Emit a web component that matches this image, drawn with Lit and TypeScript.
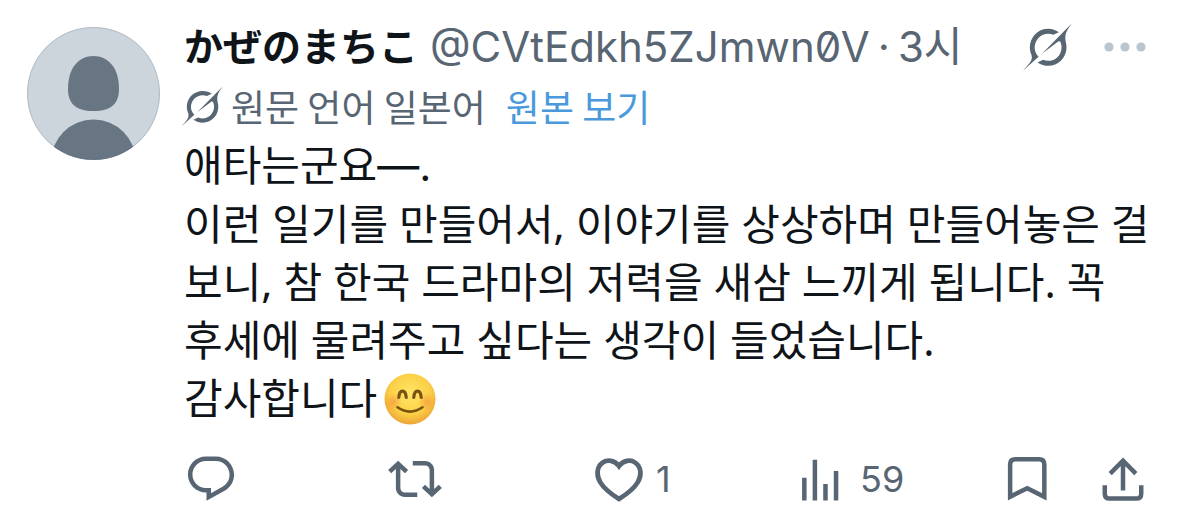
import { LitElement, html, css, svg } from "lit";
import { customElement, property } from "lit/decorators.js";

const grokPath = svg`<path d="M12.745 20.54l10.97-8.19c.539-.4 1.307-.244 1.564.38 1.349 3.288.746 7.241-1.938 9.955-2.683 2.714-6.417 3.31-9.83 1.954l-3.728 1.745c5.347 3.697 11.84 2.782 15.898-1.324 3.219-3.255 4.216-7.692 3.284-11.693l.008.009c-1.351-5.878.332-8.227 3.782-13.031L33 0l-4.54 4.59v-.014L12.743 20.544m-2.263 1.987c-3.837-3.707-3.175-9.446.1-12.755 2.42-2.449 6.388-3.448 9.852-1.979l3.72-1.737c-.67-.49-1.53-1.017-2.515-1.387-4.455-1.854-9.789-.931-13.41 2.728-3.483 3.523-4.579 8.94-2.697 13.561 1.405 3.454-.899 5.898-3.22 8.364C1.49 30.2.666 31.074 0 32l10.478-9.466"/>`;

const icons = {
  reply: svg`<path d="M1.751 10c0-4.42 3.584-8 8.005-8h4.366c4.49 0 8.129 3.64 8.129 8.13 0 2.96-1.607 5.68-4.196 7.11l-8.054 4.46v-3.69h-.067c-4.49.1-8.183-3.51-8.183-8.01zm8.005-6c-3.317 0-6.005 2.69-6.005 6 0 3.37 2.77 6.08 6.138 6.01l.351-.01h1.761v2.3l5.087-2.81c1.951-1.08 3.163-3.13 3.163-5.36 0-3.39-2.744-6.13-6.129-6.13H9.756z"/>`,
  repost: svg`<path d="M4.5 3.88l4.432 4.14-1.364 1.46L5.5 7.55V16c0 1.1.896 2 2 2H13v2H7.5c-2.209 0-4-1.79-4-4V7.55L1.432 9.48.068 8.02 4.5 3.88zM16.5 6H11V4h5.5c2.209 0 4 1.79 4 4v8.45l2.068-1.93 1.364 1.46-4.432 4.14-4.432-4.14 1.364-1.46 2.068 1.93V8c0-1.1-.896-2-2-2z"/>`,
  like: svg`<path d="M12 6.300C10 3.600 6.900 3.300 4.800 4.700 1.900 6.700 1.900 10.500 3.700 13.500 5.300 16.200 8.200 18.500 12 20.900 15.800 18.500 18.700 16.200 20.300 13.500 22.100 10.500 22.100 6.700 19.200 4.700 17.100 3.300 14 3.600 12 6.300z" fill="none" stroke="currentColor" stroke-width="2.100"/>`,
  views: svg`<path d="M2.700 11.400h2V21.500h-2zM7.400 3.400h2V21.500h-2zM12.100 14.200h2v7.300h-2zM16.800 8.400h2v13.100h-2z"/>`,
  bookmark: svg`<path d="M4.500 19.900V5.500q0-2.300 2.300-2.300h10.600q2.300 0 2.300 2.300v14.400L12.100 16.100z" fill="none" stroke="currentColor" stroke-width="2"/>`,
  share: svg`<path d="M12 3.900V17.100M6.300 9.600L12 3.900l5.700 5.700M3.900 14.800v3.700q0 2.200 2.200 2.200h11.800q2.200 0 2.200-2.200v-3.700" fill="none" stroke="currentColor" stroke-width="2"/>`,
};

@customElement("post-action")
class PostAction extends LitElement {
  @property() icon: keyof typeof icons = "reply";
  @property() label = "";
  @property() count = "";
  static styles = css`
    :host { display: block; }
    .action {
      display: flex; align-items: center; gap: 10px;
      margin: 0; padding: 0; border: 0; background: none;
      color: #586573; cursor: pointer;
      font: 36px/54px "Inter", sans-serif;
    }
    .icon { display: block; width: 54px; height: 54px; fill: currentColor; }
  `;
  render() {
    return html`<button class="action" type="button" aria-label=${this.label}>
      <svg class="icon" viewBox="0 0 24 24" aria-hidden="true">${icons[this.icon]}</svg>
      ${this.count ? html`<span>${this.count}</span>` : ""}
    </button>`;
  }
}

@customElement("app-root")
class AppRoot extends LitElement {
  static styles = css`
    :host {
      display: block; background: #fff; color: #0f1419;
      font-family: "Inter", "Noto Sans CJK KR", sans-serif;
    }
    .post { display: flex; gap: 24px; padding: 18px 27px 0; }
    .avatar { flex: none; width: 133px; height: 133px; margin-top: 9px; }
    .content { flex: 1; min-width: 0; }
    .head { display: flex; align-items: center; height: 58px; white-space: nowrap; }
    .name { padding-bottom: 6px; font: 700 39px/52px "Noto Sans CJK JP", sans-serif; color: inherit; text-decoration: none; }
    .meta { display: flex; gap: 8px; margin-left: 12px; font-size: 42px; line-height: 58px; color: #586573; font-feature-settings: "zero"; }
    .meta a { color: inherit; text-decoration: none; }
    .tools { display: flex; align-items: center; gap: 32px; margin-left: auto; padding-right: 6px; }
    .tool { display: block; margin: 0; padding: 0; border: 0; background: none; color: #586573; cursor: pointer; }
    .tool svg, .source svg { display: block; fill: currentColor; }
    .more { color: #b9c5cf; }
    .source {
      display: flex; align-items: center; height: 60px; margin-left: -3px;
      font: 37px/60px "Noto Sans CJK KR", sans-serif; color: #586573;
    }
    .source span { margin: 0 20px 0 8px; }
    .source a { color: #4a99dc; text-decoration: none; }
    .text {
      margin: 0 -12px 0 0;
      font: 42px/58px "Noto Sans", "Noto Sans CJK KR", sans-serif;
      white-space: pre-line; word-break: keep-all;
    }
    .dash { font-family: "Inter", sans-serif; }
    .emoji { width: 52px; height: 52px; margin-left: 7px; vertical-align: -11px; }
    .actions { display: grid; grid-template-columns: repeat(4, 1fr) auto; margin-top: 25px; padding-right: 2px; }
    .pair { display: flex; gap: 42px; }
  `;
  render() {
    return html`<article class="post">
      <svg class="avatar" viewBox="0 0 133 133" role="img" aria-label="프로필 사진">
        <defs><clipPath id="disc"><circle cx="66.500" cy="66.500" r="66.500"/></clipPath></defs>
        <g clip-path="url(#disc)">
          <path fill="#cdd5dc" d="M0 0h133v133H0z"/>
          <path fill="#687684" d="M66.500 29c15 0 25.500 12 25.500 33 0 14-7 22-25.500 22S41 76 41 62c0-21 10.500-33 25.500-33z"/>
          <circle fill="#687684" cx="66.500" cy="135" r="42.500"/>
        </g>
        <circle cx="66.500" cy="66.500" r="66" fill="none" stroke="#5b7083" stroke-opacity=".25"/>
      </svg>
      <div class="content">
        <header class="head">
          <a class="name" href="#profile">かぜのまちこ</a>
          <div class="meta"><a href="#profile">@CVtEdkh5ZJmwn0V</a><span>·</span><time>3시</time></div>
          <div class="tools">
            <button class="tool" type="button" aria-label="Grok">
              <svg width="49" height="48" viewBox="0 0 33 32">${grokPath}</svg>
            </button>
            <button class="tool more" type="button" aria-label="더 보기">
              <svg width="42" height="10" viewBox="0 0 42 10"><circle cx="5" cy="5" r="4.600"/><circle cx="21" cy="5" r="4.600"/><circle cx="37" cy="5" r="4.600"/></svg>
            </button>
          </div>
        </header>
        <div class="source">
          <svg width="42" height="41" viewBox="0 0 33 32" aria-hidden="true">${grokPath}</svg>
          <span>원문 언어 일본어</span><a href="#original">원본 보기</a>
        </div>
        <p class="text">애타는군요<span class="dash">—.</span>
이런 일기를 만들어서, 이야기를 상상하며 만들어놓은 걸 보니, 참 한국 드라마의 저력을 새삼 느끼게 됩니다. 꼭 후세에 물려주고 싶다는 생각이 들었습니다.
감사합니다<svg class="emoji" viewBox="0 0 52 52" role="img" aria-label="😊"><defs>
            <radialGradient id="face" cx=".5" cy=".4" r=".62"><stop offset="0" stop-color="#ffe768"/><stop offset=".65" stop-color="#fbcf45"/><stop offset="1" stop-color="#eb9f35"/></radialGradient>
            <radialGradient id="blush"><stop offset="0" stop-color="#f58a3c" stop-opacity=".6"/><stop offset="1" stop-color="#f58a3c" stop-opacity="0"/></radialGradient></defs>
            <circle cx="26" cy="26" r="25.500" fill="url(#face)"/>
            <circle cx="9" cy="29" r="9" fill="url(#blush)"/><circle cx="43" cy="29" r="9" fill="url(#blush)"/>
            <path d="M14.800 24.500c.6-8.500 6.800-8.500 7.400 0M29.800 24.500c.6-8.500 6.800-8.500 7.400 0" fill="none" stroke="#7a5212" stroke-width="3.200" stroke-linecap="round"/>
            <path d="M13.500 34.300q12.500 8.700 25 0" fill="none" stroke="#7a5212" stroke-width="2.600" stroke-linecap="round"/>
          </svg></p>
        <footer class="actions">
          <post-action icon="reply" label="답글"></post-action>
          <post-action icon="repost" label="재게시"></post-action>
          <post-action icon="like" label="마음에 들어요 1" count="1"></post-action>
          <post-action icon="views" label="조회수 59" count="59"></post-action>
          <div class="pair">
            <post-action icon="bookmark" label="북마크"></post-action>
            <post-action icon="share" label="공유"></post-action>
          </div>
        </footer>
      </div>
    </article>`;
  }
}
